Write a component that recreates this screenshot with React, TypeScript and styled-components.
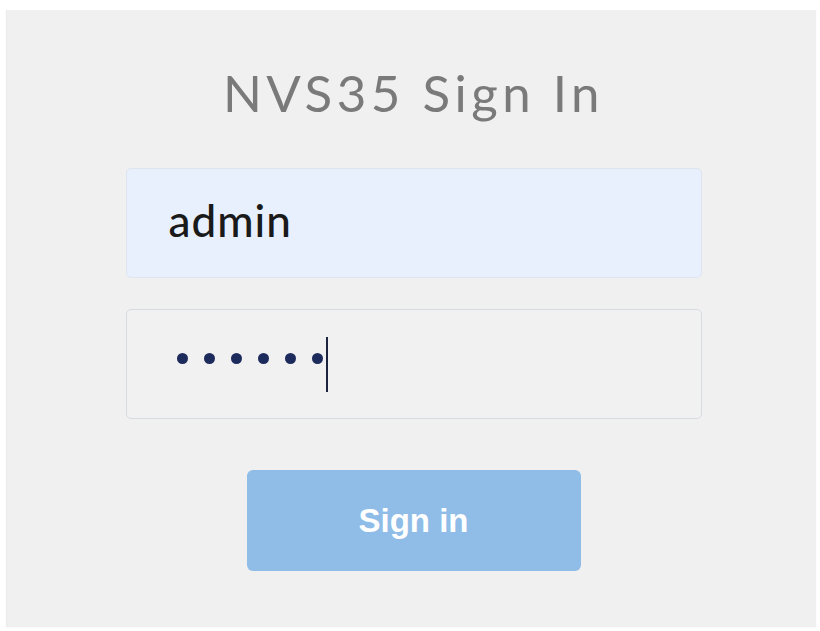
import React from 'react';
import styled, { createGlobalStyle } from 'styled-components';

const GlobalStyle = createGlobalStyle`
	html, body {
		margin: 0;
		padding: 0;
		background: #ffffff;
	}
	body {
		font-family: Lato, "Open Sans", sans-serif;
	}
`;

const Page = styled.div`
	width: 820px;
	height: 631px;
	padding: 10px 4px 4px 6px;
	box-sizing: border-box;
`;

const Panel = styled.form`
	height: 100%;
	background: #f0f0f0;
	border-left: 1px solid #ebebeb;
	box-shadow: 0 1px 2px rgba(0, 0, 0, 0.04);
	display: flex;
	flex-direction: column;
	align-items: center;
	padding-left: 4px;
	box-sizing: border-box;
`;

const Title = styled.h1`
	margin: 54px 0 0;
	font-family: Lato, sans-serif;
	font-weight: 400;
	font-size: 51px;
	line-height: 58px;
	letter-spacing: 4.5px;
	color: #7a7a7a;
`;

const Field = styled.div<{ $filled?: boolean }>`
	width: 576px;
	height: 110px;
	margin-top: ${(p) => (p.$filled ? '46px' : '31px')};
	box-sizing: border-box;
	border: 1px solid ${(p) => (p.$filled ? '#dfe5ef' : '#d6dce2')};
	border-radius: 5px;
	background: ${(p) => (p.$filled ? '#e9f0fd' : '#f1f1f1')};
	display: flex;
	align-items: center;
	padding-left: 42px;
`;

const FieldText = styled.span`
	font-family: Lato, sans-serif;
	font-size: 44px;
	font-weight: 500;
	letter-spacing: 1px;
	color: #1a1a1a;
	margin-top: -6px;
`;

const Dots = styled.span`
	display: flex;
	align-items: center;
	gap: 16px;
	padding-left: 8px;
	margin-top: -12px;
`;

const Dot = styled.span`
	width: 11px;
	height: 11px;
	border-radius: 50%;
	background: #1d2a5c;
`;

const Caret = styled.span`
	width: 2px;
	height: 55px;
	margin-left: -13px;
	margin-top: 12px;
	background: #1c2440;
`;

const SubmitButton = styled.button`
	margin-top: 51px;
	width: 334px;
	height: 101px;
	border: none;
	border-radius: 6px;
	background: #8fbde8;
	color: #ffffff;
	font-family: "Liberation Sans", Arial, sans-serif;
	font-weight: 700;
	font-size: 33px;
	padding-bottom: 0;
	cursor: pointer;
`;

export default function App() {
	return (
		<>
			<GlobalStyle />
			<Page>
				<Panel onSubmit={(e) => e.preventDefault()}>
					<Title>NVS35 Sign In</Title>
					<Field $filled>
						<FieldText>admin</FieldText>
					</Field>
					<Field>
						<Dots>
							{Array.from({ length: 6 }).map((_, i) => (
								<Dot key={i} />
							))}
							<Caret />
						</Dots>
					</Field>
					<SubmitButton type="submit">Sign in</SubmitButton>
				</Panel>
			</Page>
		</>
	);
}
